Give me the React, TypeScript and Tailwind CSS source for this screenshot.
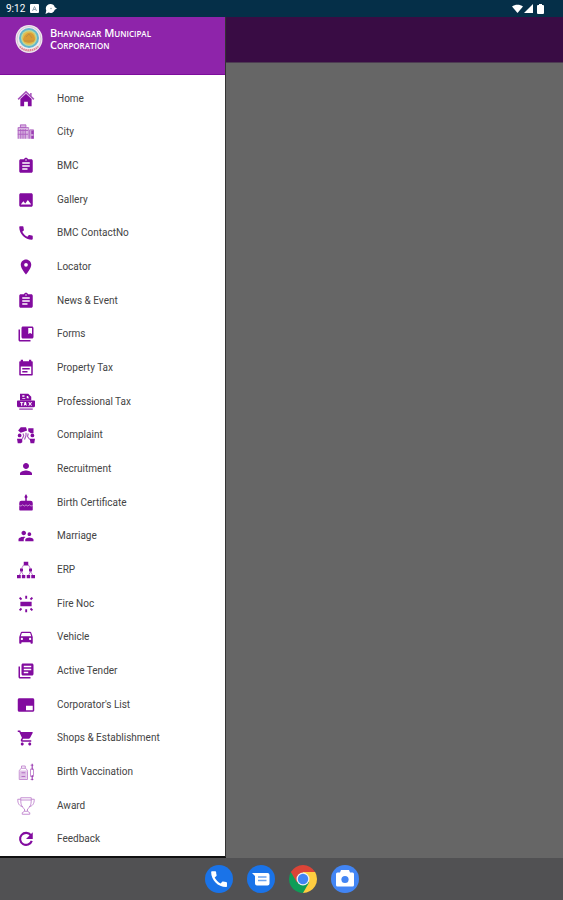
import type { ComponentType, ReactNode } from 'react';
import {
  MdAssignment,
  MdBrandingWatermark,
  MdCall,
  MdCollectionsBookmark,
  MdDirectionsCar,
  MdImage,
  MdLibraryBooks,
  MdLocationOn,
  MdPerson,
  MdShoppingCart,
  MdSupervisorAccount,
} from 'react-icons/md';

interface IconProps {
  className?: string;
}

interface MenuItem {
  label: string;
  icon: ComponentType<IconProps>;
}

function Glyph({ className, children }: IconProps & { children: ReactNode }) {
  return (
    <svg className={className} viewBox="0 0 24 24" fill="currentColor" aria-hidden="true">
      {children}
    </svg>
  );
}

function HomeIcon({ className }: IconProps) {
  return (
    <Glyph className={className}>
      <path
        d="M1.500 12.500 12 2.500l10.500 10M18.500 8V4"
        fill="none"
        stroke="currentColor"
        strokeWidth="2"
        opacity="0.7"
      />
      <path d="M12 5 4.500 12v9.500h5v-6h5v6h5V12z" />
    </Glyph>
  );
}

function CityIcon({ className }: IconProps) {
  return (
    <Glyph className={className}>
      <path d="M1 6h14v15H1zM16 9h6v12h-6zM4 2h8v4H4z" opacity="0.3" />
      <g fill="none" stroke="currentColor" strokeWidth="1.200" opacity="0.5">
        <path d="M1.500 21V6h14v15M4.500 6V2.500h7.500V6M5 21V8M8 21V8M11 21V8M1 10h14M1 15h14" />
        <path d="M17 21V9h5v12" />
      </g>
      <path d="M19 10h3v5h-3zM19 17h3v4h-3z" opacity="0.7" />
    </Glyph>
  );
}

function CalendarIcon({ className }: IconProps) {
  return (
    <Glyph className={className}>
      <path
        d="M5 1h3v2h8V1h3v2h1q1 0 1 1v17q0 1-1 1H4q-1 0-1-1V4q0-1 1-1h1zm0 9v10h14V10z"
        fillRule="evenodd"
      />
      <path d="M7 12h10v2H7zM7 16h7v2H7z" />
    </Glyph>
  );
}

function TaxIcon({ className }: IconProps) {
  return (
    <Glyph className={className}>
      <path d="M4 1h11l4 4v5H4zm3 2v2h3V3zm6 1v3h3V6h-1V4zM7 7v1h4V7z" fillRule="evenodd" />
      <path
        d="M1 10h22q1 0 1 1v6q0 2-2 2H2q-2 0-2-2v-6q0-1 1-1zm3 2v1h1.500v4H7v-4h1.500v-1zm6 0-1 5h1l.3-1h1.400l.3 1h1l-1-5zm5 0 1.500 2.500L15 17h1.300l1.200-1.700 1.200 1.700H20l-1.500-2.500L20 12h-1.300l-1.200 1.700-1.200-1.700z"
        fillRule="evenodd"
      />
      <path d="M3 20.500h18v2H3z" opacity="0.7" />
    </Glyph>
  );
}

function ComplaintIcon({ className }: IconProps) {
  return (
    <Glyph className={className}>
      <path d="M5 1.500h7l1.500 4.500-4.500 1.500-4 1.500-3.500-3zM15 3h7v6.500h-3.500L15 7z" />
      <circle cx="3.500" cy="12.500" r="2.500" />
      <circle cx="20.500" cy="12.500" r="2.500" />
      <path d="M0 17h7v4.500L5 23H1zM17 17h7l-1 6h-5z" />
      <path
        d="M8 10l1 3-2 4M12 9v4l-2 5M15 10l-1 4 3 4"
        fill="none"
        stroke="currentColor"
        strokeWidth="1.500"
        opacity="0.7"
      />
    </Glyph>
  );
}

function CakeIcon({ className }: IconProps) {
  return (
    <Glyph className={className}>
      <path d="M12 0l1.700 3q.6 1.500-.7 2.700V9h5q3 0 3 3v9q0 1-1 1H4q-1 0-1-1v-9q0-3 3-3h5V5.700Q9.700 4.500 10.300 3z" />
      <path
        d="M3 15.500q2.500 1.500 4.500-1 2.500 3 4.500 0 2.500 3 4.500 0 2 2.500 4.500 1"
        fill="none"
        stroke="#fff"
        strokeWidth="1"
        opacity="0.7"
      />
    </Glyph>
  );
}

function ErpIcon({ className }: IconProps) {
  return (
    <Glyph className={className}>
      <path d="M9 1h6v5H9zM4 10h4v4H4zM16 10h4v4h-4z" />
      <path d="M0 18.500h5v4.500H0zM6.500 18.500h4.500v4.500H6.500zM13 18.500h4.500v4.500H13zM19 18.500h5v4.500h-5z" />
      <path
        d="M9 5 6 10M15 5l3 5M6 14l-3 5M6 14l2.500 5M18 14l-2.500 5M18 14l3 5"
        fill="none"
        stroke="currentColor"
        strokeWidth="1"
        opacity="0.7"
      />
    </Glyph>
  );
}

function FireIcon({ className }: IconProps) {
  return (
    <Glyph className={className}>
      <path d="M4.500 9h15v6h-15zM11 1h2.500v4H11zM11 19h2.500v4H11z" />
      <path
        d="M3.500 3.500l2.500 2.500M20.500 3.500l-2.500 2.500M3.500 20.500l2.500-2.500M20.500 20.500l-2.500-2.500"
        fill="none"
        stroke="currentColor"
        strokeWidth="2.500"
      />
    </Glyph>
  );
}

function VaccineIcon({ className }: IconProps) {
  return (
    <Glyph className={className}>
      <path d="M4 10h9v11H4z" opacity="0.25" />
      <g fill="none" stroke="currentColor" strokeWidth="1.200" opacity="0.5">
        <path d="M6 4h5v3H6zM6 7c-1.500 1-3 2-3 4v11h11V11c0-2-1.500-3-3-4M6 13h5M6 18h5" />
        <path d="M18 8h4v10h-4zM18 3h4M18 22h4" />
      </g>
      <path d="M19.500 1h1.500v8h-1.500zM19.500 16h1.500v7h-1.500z" opacity="0.8" />
    </Glyph>
  );
}

function AwardIcon({ className }: IconProps) {
  return (
    <Glyph className={className}>
      <g fill="none" stroke="currentColor" strokeWidth="1.200" opacity="0.5">
        <path d="M5 1h14v3c0 7-2 10-5 12v3l3 2v2H7v-2l3-2v-3C7 14 5 11 5 4z" />
        <path d="M5 3H1c0 6 2 9 7 10M19 3h4c0 6-2 9-7 10M10 19h4M5 4h14" />
      </g>
    </Glyph>
  );
}

function FeedbackIcon({ className }: IconProps) {
  return (
    <Glyph className={className}>
      <path d="M18.500 7A8 8 0 1 0 19.700 14.500" fill="none" stroke="currentColor" strokeWidth="2.800" />
      <path d="M21 3v9h-9z" />
    </Glyph>
  );
}

const menuItems: MenuItem[] = [
  { label: 'Home', icon: HomeIcon },
  { label: 'City', icon: CityIcon },
  { label: 'BMC', icon: MdAssignment },
  { label: 'Gallery', icon: MdImage },
  { label: 'BMC ContactNo', icon: MdCall },
  { label: 'Locator', icon: MdLocationOn },
  { label: 'News & Event', icon: MdAssignment },
  { label: 'Forms', icon: MdCollectionsBookmark },
  { label: 'Property Tax', icon: CalendarIcon },
  { label: 'Professional Tax', icon: TaxIcon },
  { label: 'Complaint', icon: ComplaintIcon },
  { label: 'Recruitment', icon: MdPerson },
  { label: 'Birth Certificate', icon: CakeIcon },
  { label: 'Marriage', icon: MdSupervisorAccount },
  { label: 'ERP', icon: ErpIcon },
  { label: 'Fire Noc', icon: FireIcon },
  { label: 'Vehicle', icon: MdDirectionsCar },
  { label: 'Active Tender', icon: MdLibraryBooks },
  { label: "Corporator's List", icon: MdBrandingWatermark },
  { label: 'Shops & Establishment', icon: MdShoppingCart },
  { label: 'Birth Vaccination', icon: VaccineIcon },
  { label: 'Award', icon: AwardIcon },
  { label: 'Feedback', icon: FeedbackIcon },
];

function StatusBar() {
  return (
    <div className="flex h-[17px] shrink-0 items-center justify-between bg-[#052f48] pl-[6px] pr-[19px] text-white">
      <div className="flex items-center gap-[5px]">
        <span className="text-[10px] leading-none">9:12</span>
        <svg className="h-[9px] w-[9px]" viewBox="0 0 9 9" aria-hidden="true">
          <rect width="9" height="9" rx="1" fill="#fff" />
          <path d="M2.500 7 4.500 2.500 6.500 7M3 5.500h3" fill="none" stroke="#8fa3b0" />
        </svg>
        <svg className="ml-px h-[10px] w-3" viewBox="0 0 12 10" aria-hidden="true">
          <path
            d="M5.500 0a4.500 4.500 0 0 1 4.300 3.200L12 4.500 9.800 5.800A4.500 4.500 0 0 1 3.500 8.600L.5 10l.8-3.500A4.500 4.500 0 0 1 5.500 0z"
            fill="#fff"
          />
          <circle cx="6" cy="4.500" r="0.800" fill="#8fa3b0" />
        </svg>
      </div>
      <div className="flex items-center gap-px">
        <svg className="h-[9px] w-[11px]" viewBox="0 0 11 9" aria-hidden="true">
          <path d="M0 2.500C3 0 8 0 11 2.500L5.500 9z" fill="#fff" />
        </svg>
        <svg className="h-[9px] w-[9px]" viewBox="0 0 9 9" aria-hidden="true">
          <path d="M9 0v9H0z" fill="#fff" />
        </svg>
        <svg className="ml-[3px] h-[10px] w-[7px]" viewBox="0 0 7 10" aria-hidden="true">
          <path d="M2 0h3v1h1q1 0 1 1v7q0 1-1 1H1q-1 0-1-1V2q0-1 1-1h1z" fill="#fff" />
        </svg>
      </div>
    </div>
  );
}

function Emblem() {
  return (
    <svg className="h-7 w-7 shrink-0" viewBox="0 0 28 28" aria-hidden="true">
      <ellipse cx="14" cy="14" rx="13.500" ry="14" fill="#f1e9ef" />
      <ellipse cx="14" cy="14" rx="12" ry="12.500" fill="none" stroke="#c9b9c8" strokeWidth="0.700" />
      <path
        d="M5 21.500c4 5 14 5 18 0"
        fill="none"
        stroke="#e0808a"
        strokeWidth="2"
        strokeDasharray="1.500 0.600"
      />
      <circle cx="14" cy="13" r="10" fill="#62b5cd" />
      <circle cx="14" cy="13" r="8" fill="#b9d8a0" />
      <circle cx="14" cy="13" r="6.800" fill="#e2bc4f" />
      <path d="M8 15c1-5 4-8 8-7 3 1 4 4 4 7-3 4-9 4-12 0z" fill="#d99a35" />
      <path d="M9 16h10M11 12l3-3 3 4" fill="none" stroke="#b98a45" strokeWidth="0.800" />
    </svg>
  );
}

function DrawerHeader() {
  return (
    <header className="flex h-[58px] shrink-0 items-start gap-[7px] border-b border-[#7d0c9c] bg-[#8e24aa] pl-[15px] pt-2">
      <Emblem />
      <h1 className="pt-[2px] font-['Open_Sans','Noto_Sans',sans-serif] text-[11px] font-semibold leading-3 text-white [font-variant-caps:small-caps]">
        Bhavnagar Municipal
        <br />
        Corporation
      </h1>
    </header>
  );
}

function DrawerMenu() {
  return (
    <ul className="flex grow flex-col pt-[7px]">
      {menuItems.map(({ label, icon: Icon }) => (
        <li key={label} className="flex grow basis-0">
          <a href="#" className="flex w-full items-center gap-[22px] pl-[17px] text-[#444]">
            <Icon className="h-[18px] w-[18px] shrink-0 text-[#820b9f]" />
            <span className="text-[10px] leading-4">{label}</span>
          </a>
        </li>
      ))}
    </ul>
  );
}

function Dock() {
  return (
    <footer className="flex h-[42px] shrink-0 items-center justify-center gap-[14px] bg-[#515153]">
      <button type="button" aria-label="Phone">
        <svg className="h-7 w-7" viewBox="0 0 28 28">
          <circle cx="14" cy="14" r="14" fill="#1a73e8" />
          <path
            transform="translate(3.500 3.500) scale(0.88)"
            d="M20.010 15.380c-1.230 0-2.420-.2-3.530-.56a.977.977 0 0 0-1.010.24l-1.570 1.970c-2.830-1.350-5.480-3.900-6.890-6.830l1.950-1.660c.27-.28.35-.67.24-1.020-.37-1.110-.56-2.300-.56-3.530 0-.54-.45-.99-.99-.99H4.190C3.650 3 3 3.240 3 3.990 3 13.280 10.730 21 20.010 21c.71 0 .99-.63.99-1.180v-3.450c0-.54-.45-.99-.99-.99z"
            fill="#fff"
          />
        </svg>
      </button>
      <button type="button" aria-label="Messages">
        <svg className="h-7 w-7" viewBox="0 0 28 28">
          <circle cx="14" cy="14" r="14" fill="#1a73e8" />
          <path d="M5 8h15.500q2 0 2 2v8.500q0 2-2 2H10q-2 0-2-2v-7.500z" fill="#fff" />
          <path d="M11 12h8.500M11 15.500h8.500" stroke="#6ba3ef" strokeWidth="1.300" />
        </svg>
      </button>
      <button type="button" aria-label="Chrome">
        <svg className="h-7 w-7" viewBox="0 0 28 28">
          <path d="M14 14 1.880 7a14 14 0 0 1 24.240 0z" fill="#db4437" />
          <path d="M14 14V7h12.120A14 14 0 0 1 14 28z" fill="#ffcd40" />
          <path d="M14 14 1.880 7A14 14 0 0 0 14 28l6.060-10.500z" fill="#0f9d58" />
          <path d="M1.880 7 7.940 17.500 14 7z" fill="#db4437" />
          <circle cx="14" cy="14" r="6.500" fill="#f1f1f1" />
          <circle cx="14" cy="14" r="5.200" fill="#4285f4" />
        </svg>
      </button>
      <button type="button" aria-label="Camera">
        <svg className="h-7 w-7" viewBox="0 0 28 28">
          <circle cx="14" cy="14" r="14" fill="#4285f4" />
          <path
            d="M10 5h8l1 2.500h2.500q1.500 0 1.500 1.500v11q0 1.500-1.500 1.500h-15Q5 21.500 5 20V9q0-1.500 1.500-1.500H9z"
            fill="#fff"
          />
          <circle cx="14" cy="14.500" r="3.600" fill="#4285f4" />
        </svg>
      </button>
    </footer>
  );
}

export default function App() {
  return (
    <div className="flex min-h-screen flex-col bg-[#666] font-[Roboto,sans-serif]">
      <StatusBar />
      <div className="flex grow">
        <nav
          aria-label="Main menu"
          className="flex w-2/5 min-w-[226px] flex-col border-b-2 border-r border-b-[#111] border-r-[#333] bg-white sm:max-w-xs"
        >
          <DrawerHeader />
          <DrawerMenu />
        </nav>
        <main className="grow">
          <div className="h-[46px] border-b border-[#4d3b52] bg-[#390c44]" />
        </main>
      </div>
      <Dock />
    </div>
  );
}
